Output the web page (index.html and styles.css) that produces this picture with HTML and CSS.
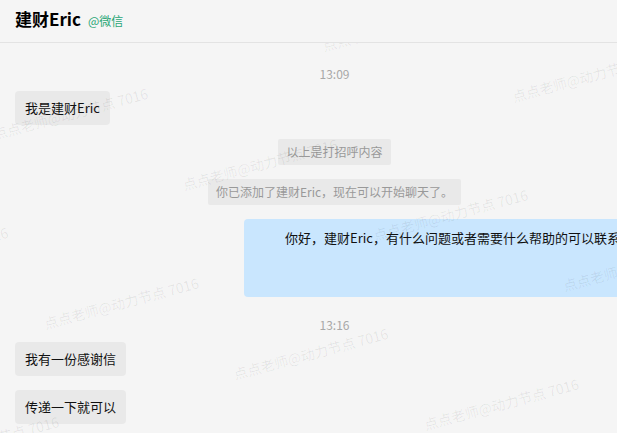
FILE: index.html
```html
<!DOCTYPE html>
<html lang="zh-CN">
<head>
    <meta charset="UTF-8">
    <meta name="viewport" content="width=device-width, initial-scale=1.0">
    <title>建财Eric</title>
    <link rel="stylesheet" href="styles.css">
</head>
<body>
    <div class="page">
        <div class="header">
            <span class="name">建财Eric</span>
            <span class="source">@微信</span>
        </div>
        <div class="chat">
            <div class="time">13:09</div>
            <div class="msg left"><div class="bubble">我是建财Eric</div></div>
            <div class="tip"><span>以上是打招呼内容</span></div>
            <div class="tip"><span>你已添加了建财Eric，现在可以开始聊天了。</span></div>
            <div class="msg right"><div class="bubble blue">你好，建财Eric，有什么问题或者需要什么帮助的可以联系我。</div></div>
            <div class="time">13:16</div>
            <div class="msg left"><div class="bubble">我有一份感谢信</div></div>
            <div class="msg left"><div class="bubble">传递一下就可以</div></div>

            <div class="watermark"><div class="wm-inner" id="wmInner"></div></div>
        </div>
    </div>

    <script>
        // 水印
        const wmInner = document.getElementById('wmInner');
        for (let r = 0; r < 10; r++) {
            const row = document.createElement('div');
            row.className = 'wm-row';
            for (let c = 0; c < 4; c++) {
                const item = document.createElement('span');
                item.className = 'wm';
                item.textContent = '点点老师@动力节点 7016';
                row.appendChild(item);
            }
            wmInner.appendChild(row);
        }
    </script>
</body>
</html>
```

FILE: styles.css
```css
body {
    margin: 0;
    background-color: #f5f5f5;
    font-family: "Microsoft YaHei", "Noto Sans CJK SC", "Noto Sans", sans-serif;
    color: #111;
    overflow: hidden;
}
.page {
    width: 669px;
}
.header {
    display: flex;
    align-items: baseline;
    gap: 7px;
    height: 43px;
    box-sizing: border-box;
    padding: 7px 15px 0;
    border-bottom: 1px solid #e3e3e3;
}
.name {
    font-size: 17px;
    font-weight: bold;
    line-height: 24px;
    color: #000;
}
.source {
    font-size: 12px;
    color: #2aa676;
}
.chat {
    position: relative;
    height: 389px;
    overflow: hidden;
    padding: 17px 15px 0;
    display: flex;
    flex-direction: column;
}
.time {
    margin: 5px 0 8px;
    text-align: center;
    font-size: 12px;
    line-height: 18px;
    color: #a8a8a8;
}
.msg {
    display: flex;
    margin-bottom: 14px;
}
.msg.right {
    justify-content: flex-end;
}
.bubble {
    padding: 8px 10px;
    font-size: 13px;
    line-height: 18px;
    background-color: #e9e9e9;
    border-radius: 4px;
}
.bubble.blue {
    width: 410px;
    height: 78px;
    box-sizing: border-box;
    padding: 10px 12px;
    text-indent: 29px;
    white-space: nowrap;
    background-color: #c9e6fe;
}
.tip {
    display: flex;
    justify-content: center;
    margin-bottom: 14px;
}
.tip span {
    padding: 4px 8px;
    font-size: 12px;
    line-height: 18px;
    color: #999;
    background-color: #e9e9e9;
    border-radius: 2px;
}
.watermark {
    position: absolute;
    top: 0;
    left: 0;
    right: 0;
    bottom: 0;
    overflow: hidden;
    pointer-events: none;
}
.wm-inner {
    position: absolute;
    left: -440px;
    top: -209px;
    width: 1500px;
    transform: rotate(-15deg);
    transform-origin: 0 0;
}
.wm-row {
    display: flex;
    height: 98px;
    white-space: nowrap;
}
.wm-row:nth-child(even) {
    padding-left: 170px;
}
.wm {
    flex-shrink: 0;
    width: 341px;
    font-size: 14px;
    line-height: 20px;
    color: rgba(0, 0, 0, 0.07);
}
```
